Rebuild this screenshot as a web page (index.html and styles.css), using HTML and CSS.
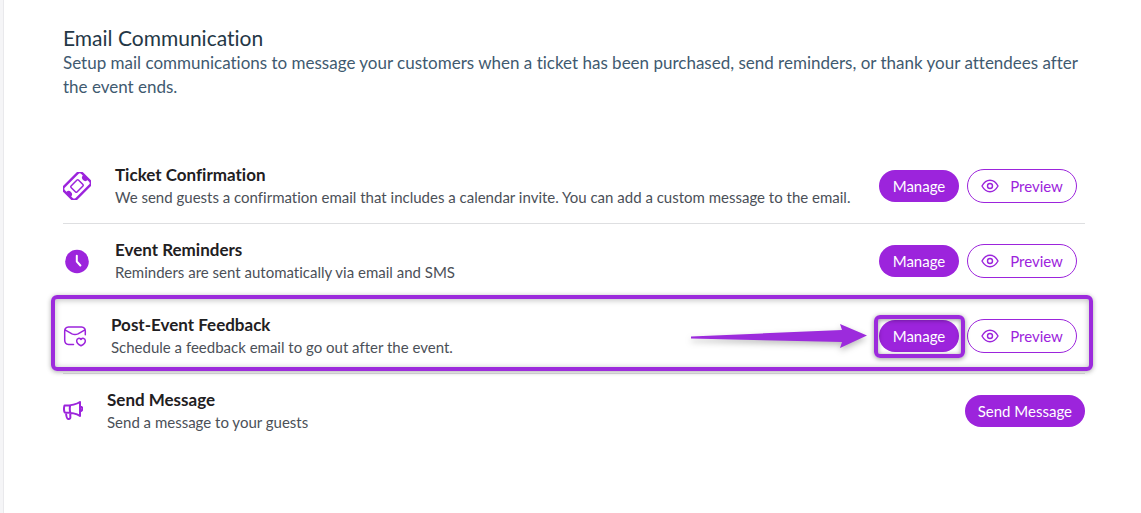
FILE: index.html
```html
<!DOCTYPE html>
<html lang="en">
<head>
<meta charset="utf-8">
<meta name="viewport" content="width=device-width, initial-scale=1">
<title>Email Communication</title>
<link rel="stylesheet" href="styles.css">
</head>
<body>
<svg class="symbols" aria-hidden="true">
  <symbol id="eye" viewBox="0 0 18 18"><path d="M1 9C3 5.300 5.700 3.300 9 3.300S15 5.300 17 9C15 12.700 12.300 14.700 9 14.700S3 12.700 1 9Z"/><circle cx="9" cy="9" r="2.500"/></symbol>
</svg>
<main class="panel">
  <header class="intro">
    <h1 class="heading">Email Communication</h1>
    <p class="lead">Setup mail communications to message your customers when a ticket has been purchased, send reminders, or thank your attendees after the event ends.</p>
  </header>
  <ul class="list">
    <li class="row">
      <svg class="icon icon-large" viewBox="0 0 28 28" aria-hidden="true">
        <g transform="rotate(-45 14 14)">
          <rect x="1.300" y="5.300" width="25.400" height="17.400" rx="3.200" fill="none" stroke="currentColor" stroke-width="2.400"/>
          <path d="M1 10.700h1.200a3.300 3.300 0 0 1 0 6.600H1ZM27 10.700h-1.200a3.300 3.300 0 0 0 0 6.600H27Z" fill="currentColor"/>
          <rect x="8.800" y="9.800" width="10.400" height="8.400" rx="1" fill="none" stroke="currentColor" stroke-width="1.500"/>
        </g>
      </svg>
      <div class="text"><h2 class="title">Ticket Confirmation</h2><p class="note">We send guests a confirmation email that includes a calendar invite. You can add a custom message to the email.</p></div>
      <div class="actions">
        <button class="button solid" type="button">Manage</button>
        <button class="button outline" type="button"><svg class="eye" aria-hidden="true"><use href="#eye"/></svg>Preview</button>
      </div>
    </li>
    <li class="row">
      <svg class="icon icon-large" viewBox="0 0 28 28" aria-hidden="true">
        <circle cx="14" cy="14.500" r="11.800" fill="currentColor"/>
        <path d="M13.800 8.700V14.500l3.600 4" fill="none" stroke="#fff" stroke-width="2" stroke-linecap="round" stroke-linejoin="round"/>
      </svg>
      <div class="text"><h2 class="title">Event Reminders</h2><p class="note">Reminders are sent automatically via email and SMS</p></div>
      <div class="actions">
        <button class="button solid" type="button">Manage</button>
        <button class="button outline" type="button"><svg class="eye" aria-hidden="true"><use href="#eye"/></svg>Preview</button>
      </div>
    </li>
    <li class="row marked">
      <svg class="icon icon-medium line" viewBox="0 0 24 24" aria-hidden="true">
        <path d="M22.300 10.800V7C22.300 4 20.500 3.200 18.500 3H5.500C3.200 3.200 1.700 4 1.700 7V16c0 3 1 4.300 3.800 4.500H10.500M2 5.800 9 9.800c2 1 4 1 6 0L22 5.800"/>
        <path d="M18 21.800c-2.800-1.300-4.500-3.300-4.300-5.300.2-2.300 2.800-2.900 4.300-1 1.500-1.900 4.100-1.300 4.300 1 .2 2-1.500 4-4.300 5.300Z"/>
      </svg>
      <div class="text"><h2 class="title">Post-Event Feedback</h2><p class="note">Schedule a feedback email to go out after the event.</p></div>
      <svg class="arrow" viewBox="0 0 176 24" aria-hidden="true"><path d="M0 12.500 151 6 149 0 176 11.500 149 24 151 18 0 14.500Z"/></svg>
      <div class="actions">
        <span class="target"><button class="button solid" type="button">Manage</button></span>
        <button class="button outline" type="button"><svg class="eye" aria-hidden="true"><use href="#eye"/></svg>Preview</button>
      </div>
    </li>
    <li class="row last">
      <svg class="icon icon-small line heavy" viewBox="0 0 20 20" aria-hidden="true">
        <path d="M1.500 4.500C7 4.500 12.500 4 17 1V15C12.500 12 7 11.500 1.700 11.500 0.700 9 0.700 7 1.500 4.500ZM7.200 4.500C6.500 7 6.700 9.300 7.300 11.500M3 11.700C3.200 14.500 3.500 17.800 5.300 18 7.200 18.100 7.600 17 7.300 14.800V11.700M17 5.500C20 5.500 20.200 10 17 10.200"/>
      </svg>
      <div class="text"><h2 class="title">Send Message</h2><p class="note">Send a message to your guests</p></div>
      <div class="actions"><button class="button solid" type="button">Send Message</button></div>
    </li>
  </ul>
</main>
</body>
</html>
```
FILE: styles.css
```css
* { box-sizing: border-box; }
body {
  margin: 0;
  padding-left: 3px;
  background: #f5f5f7;
  color: #1f2022;
  font-family: Lato, "Liberation Sans", sans-serif;
  font-variant-ligatures: none;
}
h1, h2, p, ul { margin: 0; padding: 0; }
.symbols { position: absolute; width: 0; height: 0; }
.panel {
  min-height: 100vh;
  padding: 25px 56px 64px 59px;
  background: #fff;
  border-left: 1px solid #e9e9ec;
}
.intro { padding-bottom: 50px; }
.heading {
  padding-bottom: 1px;
  color: #243746;
  font-size: 21px;
  font-weight: 400;
  line-height: 25px;
}
.lead {
  color: #3f5a70;
  font-size: 17px;
  line-height: 24px;
}
.list { list-style: none; }
.row {
  position: relative;
  display: flex;
  align-items: center;
  gap: 24px;
  min-height: 75px;
  padding: 0 8px 0 0;
  border-bottom: 1px solid #dedfe1;
}
.row.last { min-height: 73px; padding-right: 0; border-bottom: 0; }
.icon { flex: none; color: #9c24dc; }
.icon-large { width: 28px; height: 28px; }
.icon-medium { width: 24px; height: 24px; }
.icon-small { width: 20px; height: 20px; }
.line {
  fill: none;
  stroke: currentColor;
  stroke-width: 1.5;
  stroke-linecap: round;
  stroke-linejoin: round;
}
.heavy { stroke-width: 2; }
.text { flex: 1; }
.title {
  font-size: 17px;
  font-weight: 700;
  line-height: 23px;
}
.note {
  color: #4b5058;
  font-size: 15px;
  line-height: 23px;
}
.actions {
  display: flex;
  flex: none;
  align-items: center;
  gap: 8px;
}
.button {
  height: 32px;
  padding: 0 13px;
  border: 0;
  border-radius: 17px;
  font: inherit;
  font-size: 15px;
  white-space: nowrap;
}
.solid { min-width: 80px; background: #9c24dc; color: #fff; }
.outline {
  display: flex;
  align-items: center;
  justify-content: center;
  gap: 11px;
  min-width: 110px;
  height: 34px;
  border: 1px solid #9c24dc;
  background: #fff;
  color: #9c24dc;
}
.eye {
  width: 18px;
  height: 18px;
  fill: none;
  stroke: currentColor;
  stroke-width: 1.4;
}
.marked::after {
  content: "";
  position: absolute;
  inset: -4px -8px 2px -12px;
  border: 4px solid #9c2bdc;
  border-radius: 6px;
  box-shadow: 0 1px 5px #0005, inset 0 1px 6px #0004;
  pointer-events: none;
}
.arrow {
  position: absolute;
  right: 218px;
  width: 176px;
  height: 24px;
  fill: #9c2bdc;
  filter: drop-shadow(0 3px 3px #0004);
}
.target { position: relative; display: flex; }
.target::after {
  content: "";
  position: absolute;
  inset: -5px -6px -6px -5px;
  border: 4px solid #9c2bdc;
  border-radius: 6px;
  box-shadow: 0 1px 5px #0006, inset 0 1px 5px #0006;
  pointer-events: none;
}
```
